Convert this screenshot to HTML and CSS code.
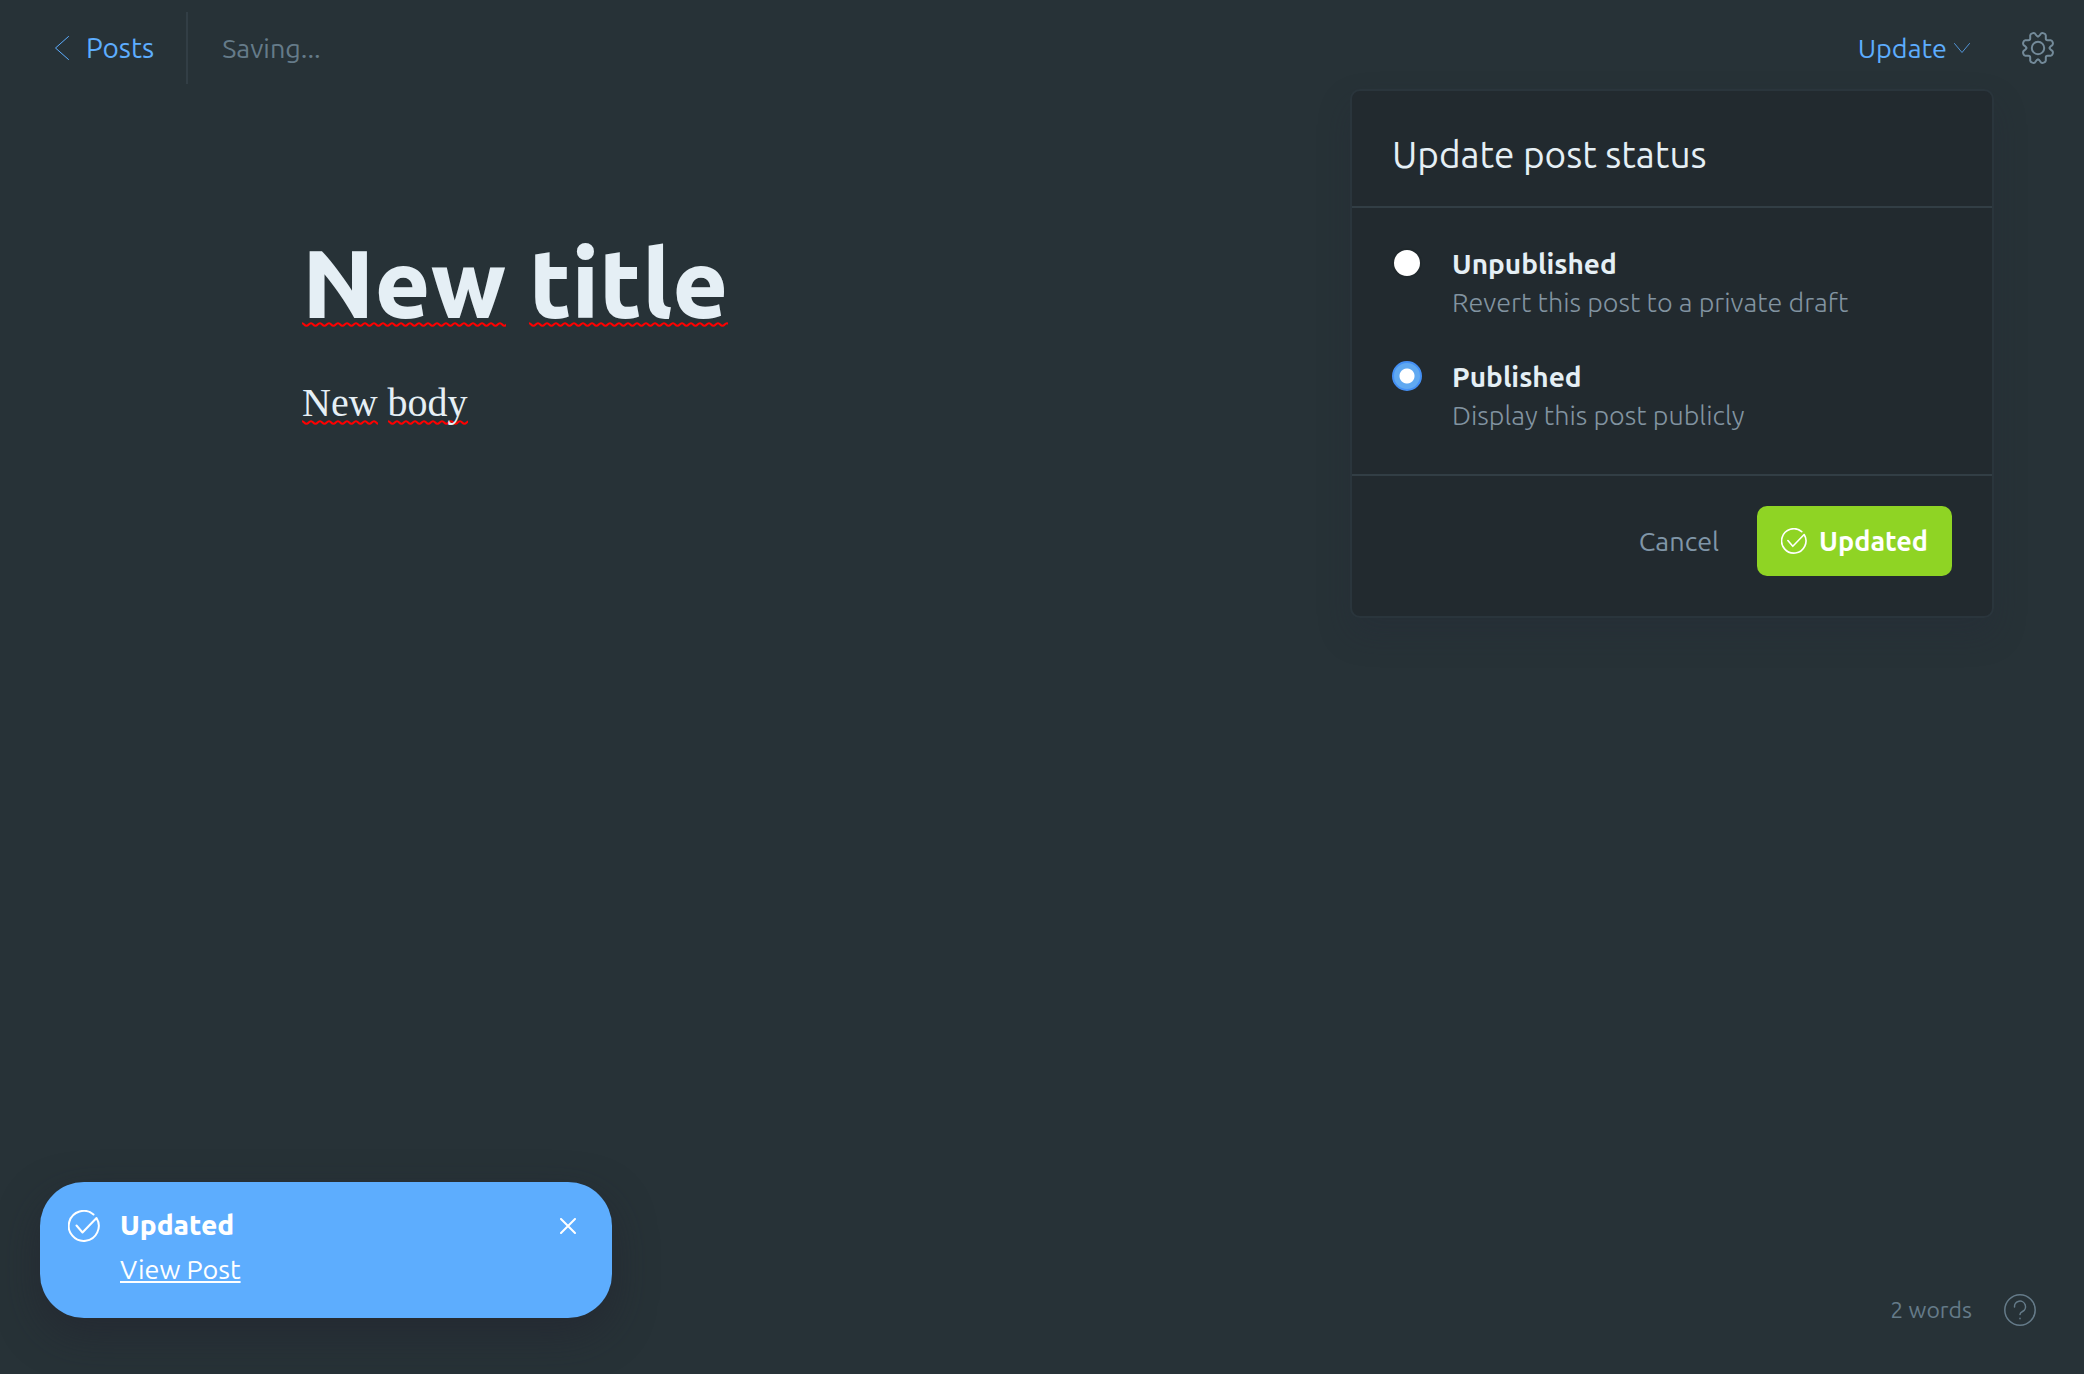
FILE: index.html
```html
<!DOCTYPE html>
<html lang="en">
<head>
<meta charset="utf-8">
<title>New title</title>
<meta name="viewport" content="width=device-width, initial-scale=1">
<link rel="stylesheet" href="styles.css">
</head>
<body>
<div class="editor">
  <header class="topbar">
    <a class="back" href="#posts">
      <svg class="back-icon" viewBox="0 0 14 24" aria-hidden="true"><path d="M13.500 .5.5 12l13 11.500"/></svg>
      Posts
    </a>
    <span class="divider"></span>
    <span class="status">Saving...</span>
    <div class="update">
      <button class="update-trigger" type="button" aria-expanded="true">
        Update
        <svg class="chevron" viewBox="0 0 16 10" aria-hidden="true"><path d="M.5.5 8 9.500 15.500.5"/></svg>
      </button>
      <form class="panel">
        <h2 class="panel-title">Update post status</h2>
        <div class="options">
          <label class="option">
            <input class="radio" type="radio" name="status">
            <span class="option-text"><span class="option-name">Unpublished</span><span class="option-hint">Revert this post to a private draft</span></span>
          </label>
          <label class="option">
            <input class="radio" type="radio" name="status" checked>
            <span class="option-text"><span class="option-name">Published</span><span class="option-hint">Display this post publicly</span></span>
          </label>
        </div>
        <div class="actions">
          <button class="cancel" type="button">Cancel</button>
          <button class="confirm" type="button">
            <svg class="confirm-icon" viewBox="0 0 32 32" aria-hidden="true"><path d="M25.500 4.500A15 15 0 1 0 28.500 8L14.500 22.500l-6-7"/></svg>
            Updated
          </button>
        </div>
      </form>
    </div>
    <button class="settings" type="button" aria-label="Settings">
      <svg class="icon" viewBox="0 0 32 32" aria-hidden="true">
        <circle cx="16" cy="16" r="6.200"/>
        <path id="cog-quarter" d="M16 4.400C17.600 4.400 18 2.600 19 1.600C20.300.4 23.600 1.600 23.800 3.300V6.500C23.800 7.800 24.200 8.200 25.500 8.200H28.700C30.400 8.400 31.600 11.700 30.400 13C29.400 14 27.600 14.400 27.600 16"/>
        <use href="#cog-quarter" transform="rotate(90 16 16)"/>
        <use href="#cog-quarter" transform="rotate(180 16 16)"/>
        <use href="#cog-quarter" transform="rotate(270 16 16)"/>
      </svg>
    </button>
  </header>
  <main class="canvas">
    <h1 class="post-title"><span class="misspelt">New</span> <span class="misspelt">title</span></h1>
    <p class="post-body"><span class="misspelt">New</span> <span class="misspelt">body</span></p>
  </main>
  <footer class="bottombar">
    <aside class="toast" role="status">
      <svg class="icon toast-icon" viewBox="0 0 32 32" aria-hidden="true"><path d="M25.500 4.500A15 15 0 1 0 28.500 8L14.500 22.500l-6-7"/></svg>
      <div class="toast-text"><strong class="toast-title">Updated</strong><a class="toast-link" href="#view">View Post</a></div>
      <button class="toast-close" type="button" aria-label="Close"><svg class="close-icon" viewBox="0 0 16 16" aria-hidden="true"><path d="m1 1 14 14M15 1 1 15"/></svg></button>
    </aside>
    <span class="words">2 words</span>
    <button class="help" type="button" aria-label="Help"><svg class="icon help-icon" viewBox="0 0 32 32" aria-hidden="true"><circle cx="16" cy="16" r="15.200"/><path d="M10.500 13a5.500 5.500 0 1 1 8 4.500c-2 1-2.500 1.500-2.500 3M16 24.200v.6"/></svg></button>
  </footer>
</div>
</body>
</html>
```
FILE: styles.css
```css
* { box-sizing: border-box; }
body {
  margin: 0;
  background: #273237;
  color: #e5eff5;
  font: 27px/36px Ubuntu, "Noto Sans", sans-serif;
}
h1, h2, p { margin: 0; font-weight: 400; }
button {
  display: flex;
  align-items: center;
  padding: 0;
  border: 0;
  background: none;
  color: inherit;
  font: inherit;
  cursor: pointer;
}
svg { display: block; flex: none; fill: none; stroke: currentColor; stroke-linecap: round; stroke-linejoin: round; }
.editor { display: flex; flex-direction: column; min-height: 100vh; }
.topbar { display: flex; align-items: center; height: 96px; padding: 0 30px 0 55px; }
.back { display: flex; align-items: center; gap: 17px; color: #5dadfe; font-size: 28px; text-decoration: none; }
.back-icon { width: 14px; height: 24px; }
.divider { width: 2px; height: 72px; margin: 0 34px 0 32px; background: #323e45; }
.status { color: #657b89; }
.update { position: relative; margin: 0 52px 0 auto; }
.update-trigger { gap: 7px; color: #5dadfe; }
.chevron { width: 16px; height: 10px; opacity: .8; }
.settings { color: #738a99; }
.icon { width: 32px; height: 32px; stroke-width: 2; }
.panel {
  position: absolute;
  top: 59px;
  right: -24px;
  width: 644px;
  border: 2px solid #2a353c;
  border-radius: 10px;
  background: #222a2f;
  box-shadow: 0 16px 32px rgba(35, 40, 56, .25);
}
.panel-title { padding: 40px 40px 27px; font-size: 37px; line-height: 48px; }
.options { display: grid; gap: 37px; padding: 37px 40px 40px; border: solid #323e45; border-width: 2px 0; }
.option { display: flex; gap: 30px; }
.radio {
  appearance: none;
  flex: none;
  width: 30px;
  height: 30px;
  margin: 3px 0 0;
  border: 2px solid #20282c;
  border-radius: 50%;
  background: #fff;
}
.radio:checked { border: 2px solid #4490f5; background: radial-gradient(circle, #fff 7px, #60a9f1 8px); }
.option-text { display: grid; }
.option-name { font-size: 28px; font-weight: 600; line-height: 38px; }
.option-hint { color: #8294a1; font-weight: 300; line-height: 38px; }
.actions { display: flex; justify-content: flex-end; gap: 38px; padding: 30px 40px 40px; }
.cancel { color: #8096a8; }
.confirm { gap: 12px; height: 70px; padding: 0 24px; border-radius: 10px; background: #8fd424; color: #fff; font-weight: 600; }
.confirm-icon { width: 26px; height: 26px; stroke-width: 2; }
.canvas { flex: 1; width: 100%; max-width: 1480px; margin: 0 auto; padding: 131px 0 0; }
.post-title { font-size: 96px; font-weight: 800; line-height: 112px; }
.post-body { margin-top: 34px; font: 40px/60px "Liberation Serif", serif; }
.misspelt {
  background: url("data:image/svg+xml,%3Csvg xmlns='http://www.w3.org/2000/svg' width='9' height='5'%3E%3Cpath d='M-2 2.500Q0 0 2.200 2.500T6.700 2.500T11.200 2.500' fill='none' stroke='red' stroke-width='2'/%3E%3C/svg%3E") repeat-x 0 100%;
}
.post-title .misspelt { background-position: 0 calc(100% - 9px); }
.bottombar { display: flex; align-items: flex-end; padding: 0 48px 48px 40px; color: #657b89; }
.toast { display: flex; gap: 20px; width: 572px; height: 136px; margin-bottom: 8px; padding: 24px 36px 24px 28px; border-radius: 44px; background: #5dadfe; color: #fff; line-height: 38px; box-shadow: 0 16px 40px rgba(34, 34, 46, .5); }
.toast-icon { margin-top: 4px; }
.toast-text { display: grid; gap: 6px; align-content: start; flex: 1; justify-items: start; }
.toast-title { font-size: 28px; font-weight: 800; }
.toast-link { color: inherit; }
.toast-close { height: 40px; }
.close-icon { width: 16px; height: 16px; stroke-width: 2; }
.words { margin-left: auto; font-size: 23px; line-height: 32px; }
.help { margin-left: 32px; }
.help-icon { stroke-width: 1.500; }
```
